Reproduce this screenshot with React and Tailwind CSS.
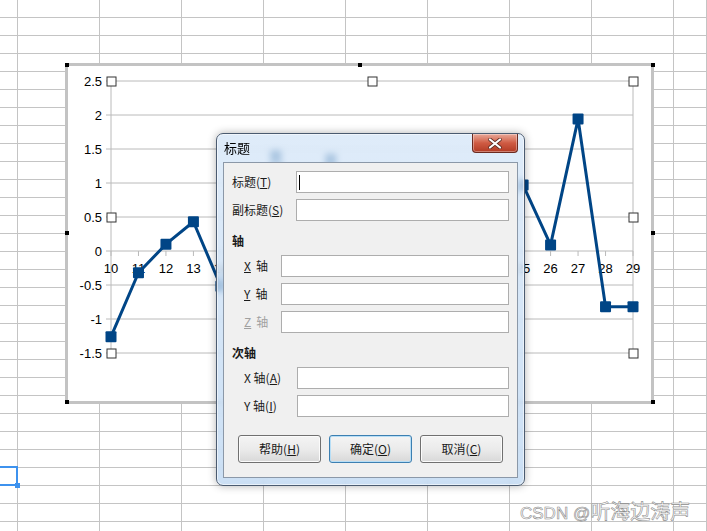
import React from "react";

const data = [-1.26, -0.32, 0.1, 0.43, -0.52, 0.3, 1.4, 0.6, 1.35, -0.2, 0.8, -0.4, 0.5, -0.1, 0.7, 0.97, 0.09, 1.94, -0.82, -0.82];
const yTicks = [2.5, 2, 1.5, 1, 0.5, 0, -0.5, -1, -1.5];

const px = (i) => 111 + i * 27.474;
const py = (v) => 81 + (2.5 - v) * 68;

// labels 15..24 sit fully under the dialog's client area
const hiddenLabel = (i) => i >= 5 && i <= 14;

function Sheet() {
  const cells = Array.from({ length: 30 * 10 });
  return (
    <div className="grid grid-cols-[18px_repeat(8,82px)_1fr] auto-rows-[18px] w-[707px] h-[531px] overflow-hidden bg-white">
      {cells.map((_, i) => (
        <div key={i} className="border-r border-b border-[#c4c4c4]" />
      ))}
    </div>
  );
}

function Chart() {
  const points = data.map((v, i) => `${px(i)},${py(v)}`).join(" ");
  return (
    <>
      <div className="absolute left-[65px] top-[63px] w-[589px] h-[341px] border-[3px] border-[#c3c3c3] bg-white">
        <svg width="583" height="335" viewBox="68 66 583 335" className="block">
          {yTicks.map((t) => (
            <line key={t} x1="106" x2="633" y1={py(t)} y2={py(t)} stroke="#bababa" strokeWidth="1" />
          ))}
          <line x1="111" x2="111" y1="81" y2="353" stroke="#bababa" />
          <line x1="633" x2="633" y1="81" y2="353" stroke="#bababa" />
          {data.map((_, i) => (
            <line key={i} x1={px(i)} x2={px(i)} y1="251" y2="256" stroke="#bababa" />
          ))}
          <g fontFamily="'Liberation Sans', Arial, sans-serif" fontSize="13" fill="#000">
            {yTicks.map((t) => (
              <text key={t} x="102" y={py(t) + 4.5} textAnchor="end">
                {t}
              </text>
            ))}
            {data.map((_, i) =>
              hiddenLabel(i) ? null : (
                <text key={i} x={px(i)} y="273" textAnchor="middle">
                  {i + 10}
                </text>
              )
            )}
          </g>
          <polyline points={points} fill="none" stroke="#004586" strokeWidth="3" strokeLinejoin="round" />
          {data.map((v, i) => (
            <rect key={i} x={px(i) - 5.5} y={py(v) - 5.5} width="11" height="11" rx="1" fill="#004586" />
          ))}
          {[
            [111, 81], [372, 81], [633, 81],
            [111, 217], [633, 217],
            [111, 353], [372, 353], [633, 353],
          ].map(([x, y], i) => (
            <rect key={i} x={x - 4} y={y - 4} width="9" height="9" fill="#fff" stroke="#333" strokeWidth="1" />
          ))}
        </svg>
      </div>
      {/* black selection handles */}
      {[
        [65, 63], [358, 63], [651, 63],
        [65, 231], [651, 231],
        [65, 400], [358, 400], [651, 400],
      ].map(([x, y], i) => (
        <div key={i} className="absolute w-[4px] h-[4px] bg-black" style={{ left: x, top: y }} />
      ))}
    </>
  );
}

function Input({ caret, className = "" }) {
  return (
    <div className={`h-[22px] bg-white border border-[#adadad] flex items-center ${className}`}>
      {caret && <div className="ml-[2px] w-[1px] h-[15px] bg-black" />}
    </div>
  );
}

function Button({ children, primary }) {
  return (
    <div
      className={`w-[83px] h-[28px] rounded-[3px] border flex items-center justify-center text-[12px] text-[#1a1a1a] bg-gradient-to-b ${
        primary
          ? "border-[#3c7fb1] from-[#f4f4f4] via-[#ebebeb] to-[#d8d8d8] shadow-[inset_0_0_0_1px_#b7def6]"
          : "border-[#707070] from-[#f4f4f4] via-[#ebebeb] to-[#d8d8d8] shadow-[inset_0_0_0_1px_#fbfbfb]"
      }`}
    >
      {children}
    </div>
  );
}

function AxisLabel({ letter, gray }) {
  return (
    <div className={`w-[57px] pl-[20px] flex ${gray ? "text-[#a0a0a0]" : ""}`}>
      <span className="underline">{letter}</span>
      <span className="ml-[5px]">轴</span>
    </div>
  );
}

function Dialog() {
  return (
    <div className="absolute left-[216px] top-[133px] w-[309px] h-[353px] rounded-[7px] border border-[#4b5b70] bg-gradient-to-b from-[#d7e7f8]/80 to-[#bfd8f2]/80 backdrop-blur-[3px] px-[6px] pb-[7px] flex flex-col shadow-[0_0_8px_rgba(0,0,0,0.3),inset_0_0_0_1px_rgba(255,255,255,0.55)] font-['Noto_Sans_CJK_SC',sans-serif]">
      <div className="relative h-[28px] flex items-center pl-[1px] text-[13px] text-black">
        标题
        <div className="absolute right-0 top-0 w-[46px] h-[19px] rounded-b-[4px] border border-t-0 border-[#6b2a20] bg-gradient-to-b from-[#e8a899] via-[#cf5b43] to-[#b23a24] flex items-center justify-center shadow-[inset_0_0_0_1px_rgba(255,255,255,0.35)]">
          <svg width="14" height="11" viewBox="0 0 14 11">
            <path d="M2 1.5 L12 9.5 M12 1.5 L2 9.5" stroke="#5a2a22" strokeWidth="3.6" strokeLinecap="round" />
            <path d="M2 1.5 L12 9.5 M12 1.5 L2 9.5" stroke="#ffffff" strokeWidth="2.2" strokeLinecap="round" />
          </svg>
        </div>
      </div>
      <div className="flex-1 border border-[#8b98a8] bg-[#f0f0f0] flex flex-col text-[12px] text-[#1a1a1a]">
        <div className="mt-[8px] flex items-center">
          <div className="w-[72px] pl-[8px]">标题(<u>T</u>)</div>
          <Input caret className="w-[213px]" />
        </div>
        <div className="mt-[6px] flex items-center">
          <div className="w-[72px] pl-[8px]">副标题(<u>S</u>)</div>
          <Input className="w-[213px]" />
        </div>
        <div className="mt-[12px] h-[16px] pl-[8px] flex items-center font-bold">轴</div>
        <div className="mt-[6px] flex items-center">
          <AxisLabel letter="X" />
          <Input className="w-[228px]" />
        </div>
        <div className="mt-[6px] flex items-center">
          <AxisLabel letter="Y" />
          <Input className="w-[228px]" />
        </div>
        <div className="mt-[6px] flex items-center">
          <AxisLabel letter="Z" gray />
          <Input className="w-[228px]" />
        </div>
        <div className="mt-[12px] h-[16px] pl-[8px] flex items-center font-bold">次轴</div>
        <div className="mt-[6px] flex items-center">
          <div className="w-[73px] pl-[20px]">X 轴(<u>A</u>)</div>
          <Input className="w-[212px]" />
        </div>
        <div className="mt-[6px] flex items-center">
          <div className="w-[73px] pl-[20px]">Y 轴(<u>I</u>)</div>
          <Input className="w-[212px]" />
        </div>
        <div className="mt-[18px] pl-[14px] flex gap-[8px]">
          <Button>帮助(<u>H</u>)</Button>
          <Button primary>确定(<u>O</u>)</Button>
          <Button>取消(<u>C</u>)</Button>
        </div>
      </div>
    </div>
  );
}

export default function App() {
  return (
    <div className="relative w-[707px] h-[531px] overflow-hidden bg-white font-['Liberation_Sans',sans-serif]">
      <Sheet />
      {/* selected cell */}
      <div className="absolute left-[-3px] top-[466px] w-[21px] h-[20px] border-2 border-[#3d92ee]" />
      <div className="absolute left-[15px] top-[483px] w-[5px] h-[5px] bg-[#3d92ee]" />
      <Chart />
      <Dialog />
      <div className="absolute left-[520px] top-[500px] text-[17px] leading-[24px] text-white [-webkit-text-stroke:0.6px_#8c8c8c] font-['Liberation_Sans','Noto_Sans_CJK_SC',sans-serif]">
        CSDN @<span className="text-[20px]">听海边涛声</span>
      </div>
    </div>
  );
}
